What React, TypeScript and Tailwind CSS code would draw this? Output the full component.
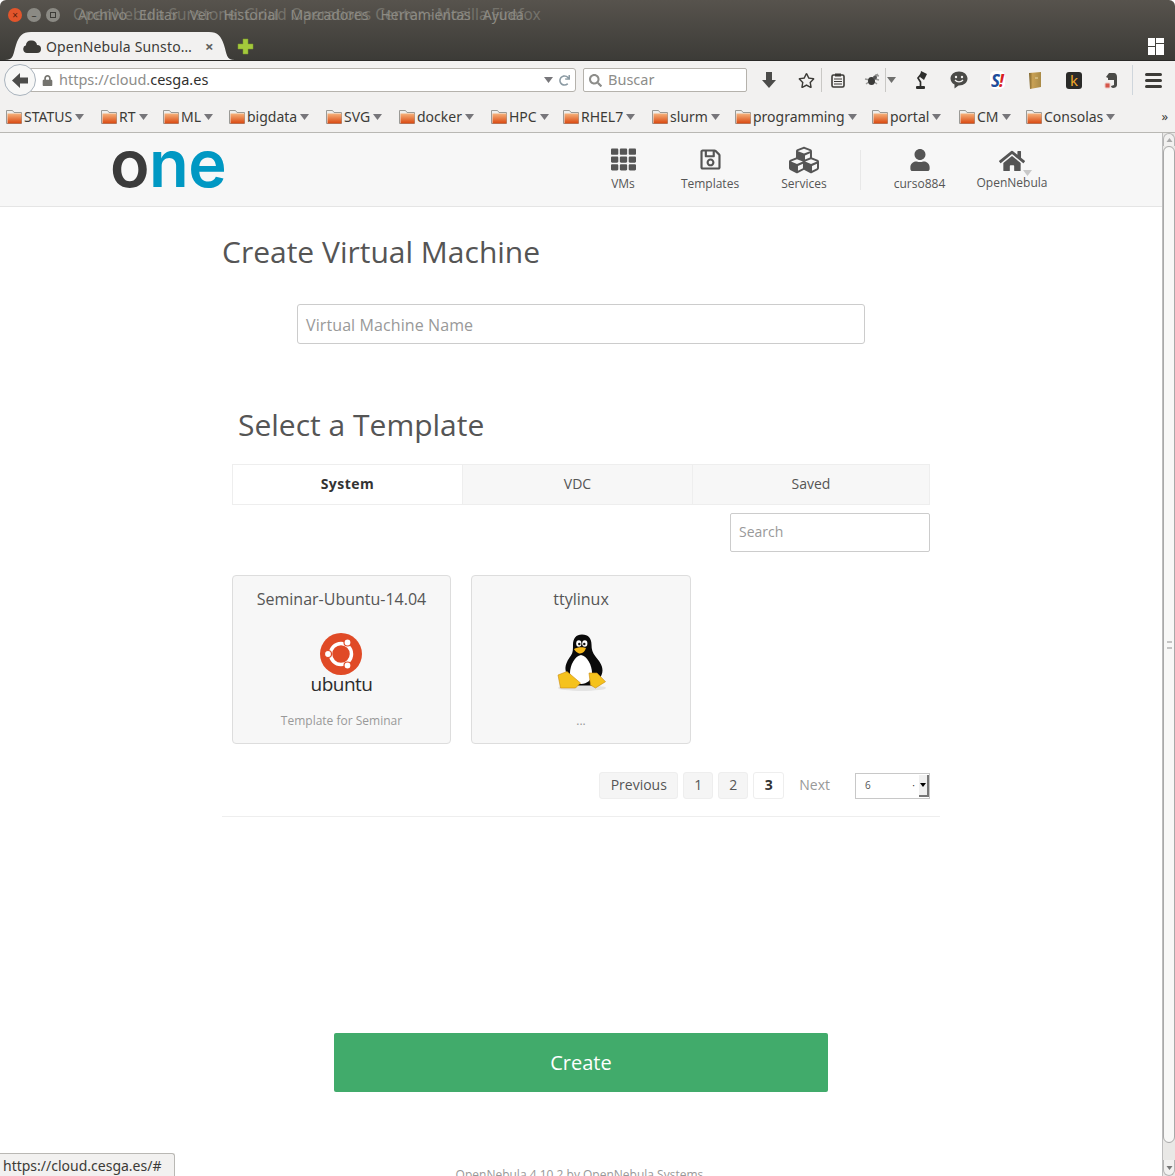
import { FaCubes, FaHome, FaRegSave, FaRegStar, FaTh, FaUser } from 'react-icons/fa'
import { FaLock, FaRedo, FaSearch } from 'react-icons/fa'

const uiFont = "font-['Noto_Sans',sans-serif]"

const bookmarks = [
  { label: 'STATUS', width: 'w-[95px]' },
  { label: 'RT', width: 'w-[62px]' },
  { label: 'ML', width: 'w-[66px]' },
  { label: 'bigdata', width: 'w-[97px]' },
  { label: 'SVG', width: 'w-[73px]' },
  { label: 'docker', width: 'w-[92px]' },
  { label: 'HPC', width: 'w-[72px]' },
  { label: 'RHEL7', width: 'w-[89px]' },
  { label: 'slurm', width: 'w-[83px]' },
  { label: 'programming', width: 'w-[137px]' },
  { label: 'portal', width: 'w-[87px]' },
  { label: 'CM', width: 'w-[67px]' },
  { label: 'Consolas', width: 'w-[100px]' },
]

const menus = ['Archivo', 'Editar', 'Ver', 'Historial', 'Marcadores', 'Herramientas', 'Ayuda']

function Caret({ className = '' }: { className?: string }) {
  return (
    <svg className={className} width="9" height="6" viewBox="0 0 9 6">
      <path d="M0 0h9L4.500 6z" fill="currentColor" />
    </svg>
  )
}

function Folder() {
  return (
    <svg width="16" height="15" viewBox="0 0 16 15" className="shrink-0">
      <defs>
        <linearGradient id="folderFill" x1="0" y1="0" x2="0" y2="1">
          <stop offset="0" stopColor="#f6b27c" />
          <stop offset="1" stopColor="#d9480f" />
        </linearGradient>
      </defs>
      <path d="M0.500 1.500h6l1.500 2h7.500v11h-15z" fill="#eeeeec" stroke="#9a9a96" />
      <rect x="1.500" y="4.500" width="14" height="10" fill="url(#folderFill)" />
    </svg>
  )
}

function WindowTitle() {
  return (
    <div className="relative h-8 shrink-0">
      <div className="absolute left-[8px] top-[8px] flex gap-[5px]">
        <div className="flex h-[14px] w-[14px] items-center justify-center rounded-full bg-[#e2552b] text-[10px] leading-none text-[#5b1f0c]">×</div>
        <div className="flex h-[14px] w-[14px] items-center justify-center rounded-full bg-[#8b8a84] text-[10px] leading-none text-[#3c3b37]">–</div>
        <div className="flex h-[14px] w-[14px] items-center justify-center rounded-full bg-[#8b8a84]">
          <div className="h-[6px] w-[6px] border border-[#3c3b37]" />
        </div>
      </div>
      <div className="absolute left-[73px] top-[6px] whitespace-nowrap text-[15.400px] leading-[18px] text-[#74726b]">
        OpenNebula Sunstone: Cloud Operations Center - Mozilla Firefox
      </div>
      <div className="absolute left-[78px] top-[6px] flex gap-[12px] whitespace-nowrap text-[14px] leading-[18px] text-[#8c8a83]">
        {menus.map((m) => (
          <span key={m}>{m}</span>
        ))}
      </div>
    </div>
  )
}

function TabStrip() {
  return (
    <div className="flex h-7 shrink-0 items-center">
      <div className="relative ml-[5px] flex h-7 w-[230px] items-center pl-[18px] pr-[28px]">
        <svg className="absolute inset-0" width="230" height="28" viewBox="0 0 230 28">
          <path d="M0 28c9 0 8-6 11-15C14 4 17 0 26 0h178c9 0 12 4 15 13 3 9 2 15 11 15z" fill="#f2f1f0" />
        </svg>
        <svg className="relative" width="18" height="14" viewBox="0 0 18 14">
          <path d="M4 14a4 4 0 0 1-1-7.800A4.500 4.500 0 0 1 8 1.500a5 5 0 0 1 6 4.500 4 4 0 0 1 0 8z" fill="#3c3b37" />
        </svg>
        <span className="relative ml-[5px] whitespace-nowrap text-[14px] tracking-[0.15px] text-[#3c3b37]">OpenNebula Sunsto…</span>
        <span className="absolute left-[200px] top-[5px] text-[15px] font-bold leading-[18px] text-[#5f5f5b]">×</span>
      </div>
      <svg className="ml-[2px]" width="17" height="17" viewBox="0 0 17 17">
        <path d="M6 1h5v5h5v5h-5v5H6v-5H1V6h5z" fill="#a4c93c" stroke="#7f9e2a" strokeWidth="0.500" />
      </svg>
      <svg className="ml-auto mr-[11px]" width="16" height="17" viewBox="0 0 16 17">
        <path d="M0 0h7v8H0zM8 0h8v5H8zM0 9h7v8H0zM8 6h8v11H8z" fill="#ffffff" />
      </svg>
    </div>
  )
}

function NavBar() {
  return (
    <div className="flex h-10 shrink-0 items-center pb-[2px] text-[#4c4c4a]">
      <div className="relative z-10 ml-[4px] flex h-8 w-8 items-center justify-center rounded-full border border-[#a9b3bd] bg-[#f7f7f6]">
        <svg width="16" height="15" viewBox="0 0 16 15">
          <path d="M8 0l-8 7.500 8 7.500V10.500h8v-6H8z" fill="#4c4c4a" />
        </svg>
      </div>
      <div className="-ml-[6px] flex h-[24px] w-[546px] items-center rounded-r-[3px] border border-[#b5b2ac] bg-white pl-[11px] pr-[4px] text-[14.500px]">
        <FaLock className="text-[11px] text-[#75746f]" />
        <span className="ml-[6px] text-[#8d8d8a]">https://cloud.</span>
        <span className="text-[#30302e]">cesga.es</span>
        <Caret className="ml-auto text-[#77767a]" />
        <FaRedo className="ml-[6px] mr-[1px] text-[11px] text-[#8b9aa3]" />
      </div>
      <div className="ml-[7px] flex h-[24px] w-[164px] items-center rounded-[2px] border border-[#b5b2ac] bg-white pl-[5px] text-[14.500px] text-[#8d8d8a]">
        <FaSearch className="text-[13px] text-[#8d8d8a]" />
        <span className="ml-[6px]">Buscar</span>
      </div>
      <svg className="ml-[15px]" width="14" height="16" viewBox="0 0 14 16">
        <path d="M4 0h6v8h4l-7 8-7-8h4z" fill="#4c4c4a" />
      </svg>
      <FaRegStar className="ml-[22px] text-[17px] text-[#3c3b37]" />
      <div className="ml-[6px] h-[24px] w-px bg-[#c9c8c5]" />
      <svg className="ml-[9px]" width="14" height="15" viewBox="0 0 14 15">
        <rect x="1" y="2" width="12" height="12" rx="1.500" fill="none" stroke="#3c3b37" strokeWidth="1.600" />
        <rect x="4" y="0.500" width="6" height="3" fill="#3c3b37" />
        <path d="M3 6h8M3 8.500h8M3 11h8" stroke="#3c3b37" strokeWidth="1.200" />
      </svg>
      <svg className="ml-[19px]" width="16" height="15" viewBox="0 0 16 15">
        <path d="M1 6l5 1M2 11l4-3M14 1l-4 3M11 2l4 1M13 11l-4-3M15 7l-4-1" stroke="#9a9a98" strokeWidth="1.500" />
        <ellipse cx="7.500" cy="8" rx="3.500" ry="4" fill="#3a3a38" />
        <circle cx="11" cy="4.500" r="2" fill="#555" />
      </svg>
      <div className="ml-[5px] h-[24px] w-px bg-[#c9c8c5]" />
      <Caret className="ml-px text-[#6f6f6d]" />
      <svg className="ml-[18px]" width="14" height="20" viewBox="0 0 14 20">
        <path d="M6.500 17V12L4 8l4-5" stroke="#2e2e2c" strokeWidth="1.700" fill="none" />
        <path d="M7 1l6 3-3 6-4-3z" fill="#2e2e2c" />
        <rect x="2" y="16" width="9" height="3" rx="1" fill="#2e2e2c" />
      </svg>
      <svg className="ml-[22px]" width="18" height="19" viewBox="0 0 18 19">
        <path d="M9 0.500C4 0.500 0.500 3.700 0.500 7.600c0 2.600 1.600 4.700 4 6v4l4-3h.5c5 0 8.500-3.200 8.500-7S14 0.500 9 0.500z" fill="#4a4a47" />
        <circle cx="6" cy="6" r="1.200" fill="#f2f1f0" />
        <circle cx="12" cy="6" r="1.200" fill="#f2f1f0" />
        <path d="M5 9c2 2.400 6 2.400 8 0" stroke="#f2f1f0" strokeWidth="1.200" fill="none" />
      </svg>
      <div className="ml-[22px] flex h-[18px] w-[15px] items-center justify-center rounded-[5px] bg-[#ffffff] text-[17px] font-bold italic leading-none">
        <span className="text-[#1f4e9c]">S</span>
        <span className="-ml-px text-[#d9201f]">!</span>
      </div>
      <svg className="ml-[23px]" width="14" height="17" viewBox="0 0 14 17">
        <defs>
          <linearGradient id="bookFill" x1="0" y1="0" x2="1" y2="0">
            <stop offset="0" stopColor="#7a6028" />
            <stop offset="0.300" stopColor="#c9a155" />
            <stop offset="1" stopColor="#a98a46" />
          </linearGradient>
        </defs>
        <path d="M1 1l12-1v15l-11 2z" fill="url(#bookFill)" />
        <path d="M7 6h3" stroke="#e9d9a8" />
      </svg>
      <div className="ml-[24px] flex h-[17px] w-[16px] items-center justify-center rounded-[3px] bg-[#2a2a28] text-[15px] leading-none text-[#f0a82a]">k</div>
      <svg className="ml-[22px]" width="14" height="17" viewBox="0 0 14 17">
        <path d="M5 1h5c2 0 3 2 3 4v8c0 2-2 3-4 3-1 0-2-1-2-2l3-1V8H4V6L2 5z" fill="#4a4a47" />
        <rect x="1" y="11" width="5" height="5" rx="1" fill="#d5564a" stroke="#ecc9c5" />
      </svg>
      <div className="ml-[14px] h-[30px] w-px bg-[#cfd6dc]" />
      <svg className="ml-[12px]" width="17" height="15" viewBox="0 0 17 15">
        <path d="M0 1.500A1.500 1.500 0 0 1 1.500 0h14a1.500 1.500 0 0 1 0 3h-14A1.500 1.500 0 0 1 0 1.500zM0 7.500A1.500 1.500 0 0 1 1.500 6h14a1.500 1.500 0 0 1 0 3h-14A1.500 1.500 0 0 1 0 7.500zM0 13.500A1.500 1.500 0 0 1 1.500 12h14a1.500 1.500 0 0 1 0 3h-14A1.500 1.500 0 0 1 0 13.500z" fill="#3c3b37" />
      </svg>
    </div>
  )
}

function BookmarksBar() {
  return (
    <div className="flex h-[32px] shrink-0 items-center border-b border-[#b9b8b4] pl-[6px] text-[14px] text-[#3c3b37]">
      {bookmarks.map((b) => (
        <div key={b.label} className={`flex items-center ${b.width}`}>
          <Folder />
          <span className="ml-[2px]">{b.label}</span>
          <Caret className="ml-[3px] text-[#77767a]" />
        </div>
      ))}
      <span className="ml-auto mr-[7px] text-[13px] text-[#3c3b37]">»</span>
    </div>
  )
}

function NavItem({ icon, label, width }: { icon: React.ReactNode; label: string; width: string }) {
  return (
    <div className={`flex flex-col items-center ${width}`}>
      <div className="flex h-[24px] items-center text-[#555]">{icon}</div>
      <span className="mt-[4px] text-[12px] leading-[16px] text-[#555]">{label}</span>
    </div>
  )
}

function PageHeader() {
  return (
    <div className="flex h-[74px] shrink-0 items-center border-b border-[#e5e5e5] bg-[#f7f7f7]">
      <div className="-mt-[12px] ml-[110px] w-[471px] font-['Inter',sans-serif] text-[65px] font-semibold leading-[62px] tracking-[-0.5px]">
        <span className="text-[#3b3b3b]">o</span>
        <span className="text-[#0098c3]">ne</span>
      </div>
      <div className="flex items-center">
        <NavItem icon={<FaTh className="text-[25px]" />} label="VMs" width="w-[84px]" />
        <NavItem icon={<FaRegSave className="text-[23px]" />} label="Templates" width="w-[90px]" />
        <NavItem icon={<FaCubes className="text-[30px]" />} label="Services" width="w-[98px]" />
        <div className="ml-[7px] h-[40px] w-px bg-[#e8e8e8]" />
        <NavItem icon={<FaUser className="text-[22px]" />} label="curso884" width="w-[117px]" />
        <div className="relative flex w-[68px] flex-col items-center">
          <div className="flex h-[24px] items-center text-[#555]">
            <FaHome className="text-[26px]" />
          </div>
          <span className="mt-[2px] text-[12px] leading-[16px] text-[#555]">OpenNebula</span>
          <Caret className="absolute left-[45px] top-[21px] text-[#c8c8c8]" />
        </div>
      </div>
    </div>
  )
}

function UbuntuLogo() {
  return (
    <div className="flex h-[70px] flex-col items-center">
      <svg width="44" height="44" viewBox="0 0 44 44">
        <circle cx="22" cy="22" r="21" fill="#e04a26" />
        <circle cx="22" cy="22" r="10.500" fill="none" stroke="#fff" strokeWidth="3.500" />
        <path d="M8 19l5 3-5 3zM30 7l1 6 5-2zM30 37l1-6 5 2z" fill="#e04a26" />
        <circle cx="9" cy="22" r="3.500" fill="#fff" stroke="#e04a26" strokeWidth="1.200" />
        <circle cx="28.500" cy="10.500" r="3.500" fill="#fff" stroke="#e04a26" strokeWidth="1.200" />
        <circle cx="28.500" cy="33.500" r="3.500" fill="#fff" stroke="#e04a26" strokeWidth="1.200" />
      </svg>
      <span className="-mt-[6px] text-[19px] font-medium leading-[28px] tracking-[-0.5px] text-[#2c2c2c]">ubuntu</span>
    </div>
  )
}

function Tux() {
  return (
    <svg className="-mt-[6px]" width="52" height="60" viewBox="0 0 52 60">
      <ellipse cx="27" cy="54" rx="24" ry="3" fill="#e4e4e4" />
      <path d="M27 0.500c-6 0-9 4-9 10 0 5 0 8-2 11-3 4-6 9-5.500 14 .5 6 5 14 8 16h19c4-2 10-9 10-15 0-6-4-10-7-14-3-4-4-7-4-12 0-6-3-10-9.500-10z" fill="#0a0a0a" />
      <path d="M26 21c-6 1-11 10-11 18 0 6 5 11 11 11s11-4 11-11c0-8-5-17-11-18z" fill="#ffffff" />
      <ellipse cx="23.800" cy="9.500" rx="2.600" ry="3.200" fill="#fff" />
      <ellipse cx="29.800" cy="9.500" rx="2.600" ry="3.200" fill="#fff" />
      <circle cx="24.300" cy="10" r="1.200" fill="#111" />
      <circle cx="29.300" cy="10" r="1.200" fill="#111" />
      <path d="M19 15c3-2 9-2.500 12-1-1 3-3 5.500-6 5.500-2.500 0-5-2.500-6-4.500z" fill="#f5b81b" />
      <path d="M3 41l9-3.500 13.500 11.500-5 5h-15z" fill="#f5c21d" stroke="#c98a10" strokeWidth="0.600" strokeLinejoin="round" />
      <path d="M34 39h8l8.500 8.700-10 6.300-5-3z" fill="#f5c21d" stroke="#c98a10" strokeWidth="0.600" strokeLinejoin="round" />
    </svg>
  )
}

function TemplateCard({ title, desc, width, children }: { title: string; desc: string; width: string; children: React.ReactNode }) {
  return (
    <div className={`flex h-[169px] flex-col items-center rounded-[4px] border border-[#dddddd] bg-[#f7f7f7] ${width}`}>
      <div className="mt-[12px] text-[16px] leading-[22px] text-[#555]">{title}</div>
      <div className="mt-[22px] flex h-[70px] items-center justify-center">{children}</div>
      <div className="mt-[10px] text-[12px] leading-[18px] text-[#999]">{desc}</div>
    </div>
  )
}

function PageButton({ label, width, active = false }: { label: string; width: string; active?: boolean }) {
  return (
    <div className={`flex h-[27px] items-center justify-center rounded-[3px] border pb-[2px] text-[14px] ${width} ${active ? 'border-[#eeeeee] bg-white font-bold text-[#333]' : 'border-[#eeeeee] bg-[#f5f5f5] text-[#555]'}`}>
      {label}
    </div>
  )
}

function Content() {
  return (
    <div className="ml-[222px] w-[718px]">
      <h1 className="mt-[25px] text-[30px] leading-[40px] text-[#555]">Create Virtual Machine</h1>
      <div className="ml-[75px] mt-[32px] flex h-[40px] w-[568px] items-center rounded-[3px] border border-[#cccccc] bg-white px-2 pt-[2px] text-[16px] tracking-[0.1px] text-[#999]">
        Virtual Machine Name
      </div>
      <h2 className="ml-[16px] mt-[61px] text-[30px] leading-[40px] text-[#555]">Select a Template</h2>

      <div className="ml-[10px] mt-[19px] w-[698px]">
        <div className="flex h-[41px] text-[14px] text-[#555]">
          <div className="flex w-[230px] items-center justify-center border border-r-0 border-[#eeeeee] bg-white pb-[2px] font-bold tracking-[0.5px] text-[#333]">System</div>
          <div className="flex w-[231px] items-center justify-center border border-[#eeeeee] bg-[#f7f7f7] pb-[2px]">VDC</div>
          <div className="flex w-[237px] items-center justify-center border border-l-0 border-[#eeeeee] bg-[#f7f7f7] pb-[2px]">Saved</div>
        </div>
        <div className="mt-[8px] flex justify-end">
          <div className="flex h-[39px] w-[200px] items-center rounded-[2px] border border-[#cccccc] bg-white px-2 pb-[2px] text-[14px] text-[#999]">Search</div>
        </div>
        <div className="mt-[23px] flex gap-[20px]">
          <TemplateCard title="Seminar-Ubuntu-14.04" desc="Template for Seminar" width="w-[219px]">
            <UbuntuLogo />
          </TemplateCard>
          <TemplateCard title="ttylinux" desc="..." width="w-[220px]">
            <Tux />
          </TemplateCard>
        </div>
        <div className="mt-[28px] flex items-center justify-end text-[14px] text-[#555]">
          <PageButton label="Previous" width="w-[79px]" />
          <div className="ml-[5px]"><PageButton label="1" width="w-[30px]" /></div>
          <div className="ml-[5px]"><PageButton label="2" width="w-[30px]" /></div>
          <div className="ml-[5px]"><PageButton label="3" width="w-[31px]" active /></div>
          <span className="-mt-[3px] ml-[15px] text-[#999]">Next</span>
          <div className="ml-[25px] flex h-[26px] w-[75px] items-center border border-[#c8c8c8] bg-white pl-[9px] text-[10px]">
            6
            <span className="ml-auto mr-[4px] text-[#333]">·</span>
            <div className="flex h-[22px] w-[10px] items-center justify-center border-b-2 border-r-2 border-[#777] bg-[#f0f0f0]">
              <Caret className="h-[4px] w-[6px] text-black" />
            </div>
          </div>
        </div>
      </div>

      <div className="mt-[17px] h-px bg-[#eeeeee]" />

      <div className="ml-[112px] mt-[216px] flex h-[59px] w-[494px] items-center justify-center rounded-[2px] bg-[#41ab6b] text-[20px] text-white">
        Create
      </div>
      <div className="ml-[-222px] mt-[74px] w-[1162px] text-center text-[12px] text-[#999]">OpenNebula 4.10.2 by OpenNebula Systems.</div>
    </div>
  )
}

function Scrollbar() {
  return (
    <div className="flex w-[13px] shrink-0 flex-col border-l border-[#bdbdbd] bg-[#e9e8e6]">
      <div className="flex h-[13px] shrink-0 items-center justify-center rounded-t-[6px] border-x border-t border-[#b5b5b5] bg-[#f2f1f0]">
        <Caret className="h-[4px] w-[7px] rotate-180 text-[#aaa]" />
      </div>
      <div className="flex h-[997px] shrink-0 items-center justify-center rounded-[6px] border border-[#a9a9a9] bg-[#f8f8f7]">
        <div className="h-[8px] w-[5px] border-y-2 border-[#c4c4c4]" />
      </div>
      <div className="flex-1" />
      <div className="flex h-[16px] shrink-0 items-center justify-center rounded-b-[6px] border-x border-b border-[#b5b5b5] bg-[#f2f1f0]">
        <Caret className="h-[4px] w-[7px] text-[#777]" />
      </div>
    </div>
  )
}

export default function App() {
  return (
    <div className={`relative flex h-[1176px] w-[1175px] flex-col overflow-hidden bg-white ${uiFont}`}>
      <div className="shrink-0 rounded-t-[6px] bg-gradient-to-b from-[#57534d] to-[#3c3b37]">
        <WindowTitle />
        <TabStrip />
      </div>
      <div className="shrink-0 border-t border-[#2a2927] bg-[#f2f1f0]">
        <NavBar />
        <BookmarksBar />
      </div>
      <div className="flex min-h-0 flex-1">
        <div className="min-w-0 flex-1 overflow-hidden font-['Open_Sans',sans-serif]">
          <PageHeader />
          <Content />
        </div>
        <Scrollbar />
      </div>
      <div className="absolute bottom-0 left-0 flex h-[23px] w-[175px] items-center rounded-tr-[3px] border-r border-t border-[#b9b8b4] bg-[#f2f1f0] pl-[3px] text-[14px] text-[#3c3b37]">
        https://cloud.cesga.es/#
      </div>
    </div>
  )
}
